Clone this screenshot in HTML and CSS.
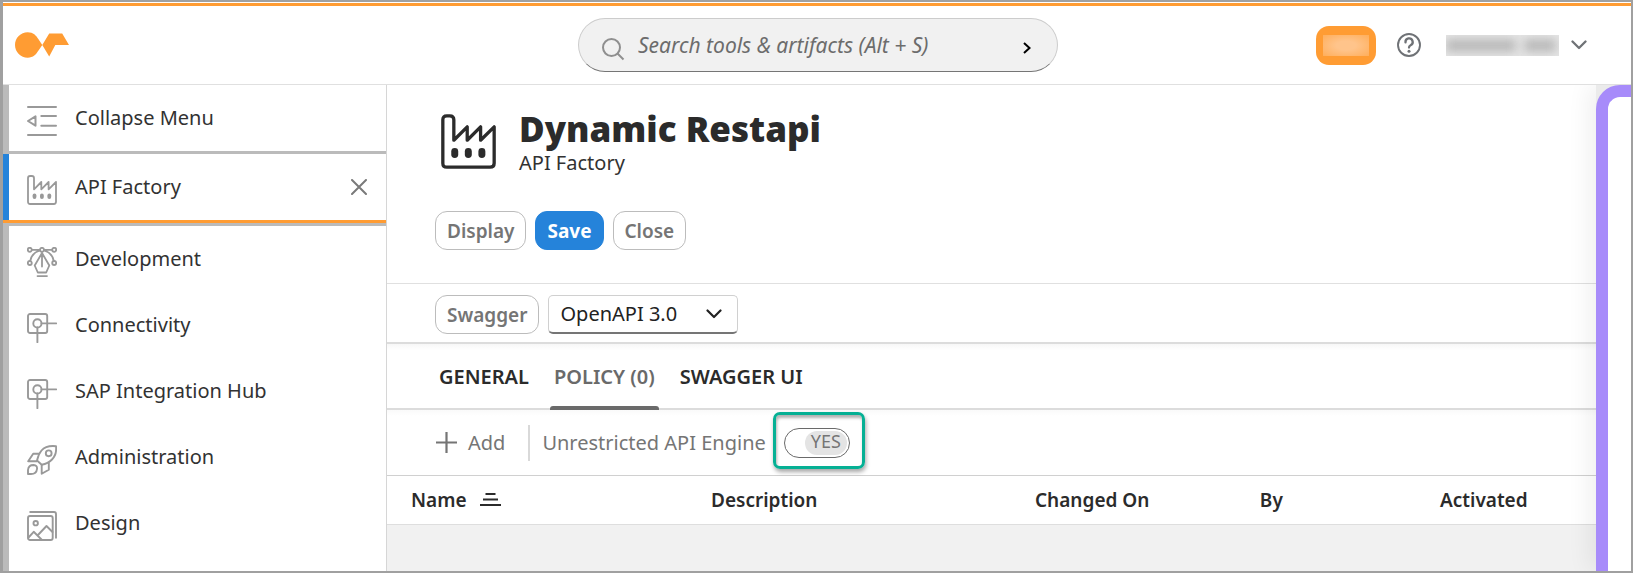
FILE: index.html
```html
<!DOCTYPE html>
<html lang="en">
<head>
<meta charset="utf-8">
<title>Dynamic Restapi - API Factory</title>
<link rel="stylesheet" href="styles.css">
</head>
<body>
<svg class="defs" aria-hidden="true">
  <symbol id="factory" viewBox="0 0 30 30">
    <path d="M1 3.2Q1 1 3.200 1H4.800Q7 1 7 3.200V14.300L14.300 7V14.300L21.600 7V14.300L29 7V26.800Q29 29 26.800 29H3.200Q1 29 1 26.800Z" fill="none" stroke="currentColor" stroke-width="1.800" stroke-linejoin="round"/>
    <rect x="5.600" y="18.600" width="3.800" height="5.400" rx="1.900" fill="currentColor"/>
    <rect x="13" y="18.600" width="3.800" height="5.400" rx="1.900" fill="currentColor"/>
    <rect x="20.400" y="18.600" width="3.800" height="5.400" rx="1.900" fill="currentColor"/>
  </symbol>
  <symbol id="connect" viewBox="0 0 30 30">
    <g fill="none" stroke="currentColor" stroke-width="1.900" stroke-linecap="round">
      <rect x="1" y="1" width="19.200" height="19" rx="2"/>
      <circle cx="10.400" cy="10.400" r="4.100"/>
      <path d="M14.500 10.400H29.200M10.400 14.500V29.200"/>
    </g>
  </symbol>
</svg>

<header class="topbar">
  <a class="logo" href="#" aria-label="Home">
    <svg width="54" height="26" viewBox="0 0 54 26"><path d="M12.700 .3C18.300 .3 21.200 3.600 23.500 7.300L27.300 12.900L23.500 18.500C21.200 22.200 18.300 25.700 12.700 25.700C5.700 25.700 0 20 0 13S5.700 .3 12.700 .3ZM34.200 1.500H47.200L54 13H40.300L34.200 24.500L27.300 12.900Z" fill="#ff9c33"/></svg>
  </a>
  <form class="search" role="search">
    <svg width="24" height="24" viewBox="0 0 24 24" fill="none" stroke="#8f8f8f" stroke-width="2"><circle cx="10.500" cy="10.500" r="8.500"/><path d="M16.500 16.500L22.500 22.500"/></svg>
    <input class="search-input" type="text" aria-label="Search" placeholder="Search tools &amp; artifacts (Alt + S)">
    <button class="search-go" type="button" aria-label="Go"><svg width="8" height="12" viewBox="0 0 8 12" fill="none" stroke="#000" stroke-width="2"><path d="M1 1L6.500 6L1 11"/></svg></button>
  </form>
  <div class="account">
    <span class="badge"><span class="badge-mask"></span></span>
    <button class="plain help" type="button" aria-label="Help"><svg width="24" height="24" viewBox="0 0 24 24" fill="none" stroke="#6f7276" stroke-width="1.900"><circle cx="12" cy="12" r="11"/><path d="M8.500 9.300A3.600 3.600 0 1 1 13.600 12.200Q12 13 12 14.500" stroke-width="2.300" stroke-linecap="round"/><circle cx="12" cy="18.300" r="1.500" fill="#6f7276" stroke="none"/></svg></button>
    <button class="plain user" type="button" aria-label="User menu"><span class="user-mask"><span class="smear smear-a"></span><span class="smear smear-b"></span></span><svg width="16" height="10" viewBox="0 0 16 10" fill="none" stroke="#6f7276" stroke-width="2.300" stroke-linecap="round" stroke-linejoin="round"><path d="M1.500 1.500L8 8L14.500 1.500"/></svg></button>
  </div>
</header>

<div class="workspace">
  <nav class="sidebar" aria-label="Main menu">
    <button class="nav-item nav-collapse" type="button">
      <svg class="nav-icon" viewBox="0 0 30 30" fill="none" stroke="currentColor" stroke-width="2" stroke-linecap="round" stroke-linejoin="round"><path d="M1 1H29M14.300 10H29M14.300 19.700H29M1 29H29M8.500 10.300V19.700L1 15Z"/></svg>
      <span>Collapse Menu</span>
    </button>
    <div class="nav-current">
      <a class="nav-item" href="#"><svg class="nav-icon"><use href="#factory"/></svg><span>API Factory</span></a>
      <button class="plain" type="button" aria-label="Close API Factory"><svg width="16" height="16" viewBox="0 0 16 16" stroke="#7a7a7a" stroke-width="2" stroke-linecap="round"><path d="M1 1L15 15M15 1L1 15"/></svg></button>
    </div>
    <a class="nav-item" href="#">
      <svg class="nav-icon" viewBox="0 0 30 30" fill="none" stroke="currentColor" stroke-width="1.800" stroke-linecap="round" stroke-linejoin="round"><circle cx="2.800" cy="2.800" r="2"/><circle cx="15" cy="2.800" r="2"/><circle cx="27.200" cy="2.800" r="2"/><circle cx="2.800" cy="16" r="2"/><circle cx="27.200" cy="16" r="2"/><path d="M4.800 2.800H13M17 2.800H25.200M13 3.500Q4.500 6 3.200 14M17 3.500Q25.500 6 26.800 14M15 6L7.700 18.500L10.800 25.500H19.200L22.300 18.500ZM15 6V19.500M10.500 29.100H20"/></svg>
      <span>Development</span>
    </a>
    <a class="nav-item" href="#"><svg class="nav-icon"><use href="#connect"/></svg><span>Connectivity</span></a>
    <a class="nav-item" href="#"><svg class="nav-icon"><use href="#connect"/></svg><span>SAP Integration Hub</span></a>
    <a class="nav-item" href="#">
      <svg class="nav-icon" viewBox="0 0 30 30" fill="none" stroke="currentColor" stroke-width="1.900" stroke-linejoin="round"><path d="M29 1.200Q19 .2 14.500 5.500Q11.500 9 10 15.500L14.700 19.700Q21 18.700 25 14.500Q30 9.500 29 1.200Z"/><circle cx="21.700" cy="8.300" r="2.900"/><path d="M12.500 8.700H6.200L1.200 16.300H10M14.700 19.700V28.800L21.800 24.700V17.300M1 29V25Q1.500 20 6.500 20Q10.500 20.300 10 24Q9.500 29 4 29Z"/></svg>
      <span>Administration</span>
    </a>
    <a class="nav-item" href="#">
      <svg class="nav-icon" viewBox="0 0 30 30" fill="none" stroke="currentColor" stroke-width="1.900" stroke-linecap="round" stroke-linejoin="round"><rect x="1" y="5" width="24.700" height="24" rx="2"/><path d="M3.200 1H27Q29 1 29 3V26.800M1.500 26.500L6.700 20.800L14.500 28.500M10.500 24.500L19.500 15L25.500 21"/><circle cx="8.700" cy="12.200" r="2.200"/></svg>
      <span>Design</span>
    </a>
  </nav>

  <main class="content">
    <section class="hero">
      <div class="hero-title">
        <svg class="hero-icon"><use href="#factory"/></svg>
        <div>
          <h1>Dynamic Restapi</h1>
          <p>API Factory</p>
        </div>
      </div>
      <div class="actions">
        <button class="btn" type="button">Display</button>
        <button class="btn btn-primary" type="button">Save</button>
        <button class="btn" type="button">Close</button>
      </div>
    </section>
    <section class="actions swagger-bar">
      <button class="btn" type="button">Swagger</button>
      <span class="select">
        <select aria-label="Specification version"><option>OpenAPI 3.0</option></select>
        <svg width="16" height="10" viewBox="0 0 16 10" fill="none" stroke="#222" stroke-width="2.200" stroke-linecap="round" stroke-linejoin="round"><path d="M1.500 1.500L8 8L14.500 1.500"/></svg>
      </span>
    </section>
    <div class="tabs" role="tablist">
      <button class="tab" type="button" role="tab">GENERAL</button>
      <button class="tab tab-active" type="button" role="tab" aria-selected="true">POLICY (0)</button>
      <button class="tab" type="button" role="tab">SWAGGER UI</button>
    </div>
    <div class="toolbar">
      <button class="plain add" type="button"><svg width="21" height="21" viewBox="0 0 21 21" stroke="#757575" stroke-width="2.200"><path d="M0 10.500H21M10.500 0V21"/></svg>Add</button>
      <label class="engine" for="engine">Unrestricted API Engine</label>
      <span class="highlight">
        <span class="switch"><input id="engine" type="checkbox" checked><span class="knob">YES</span></span>
      </span>
    </div>
    <table class="policies">
      <colgroup><col class="c-name"><col class="c-desc"><col class="c-date"><col class="c-by"><col></colgroup>
      <thead>
        <tr>
          <th scope="col"><span class="sorted">Name <svg width="21" height="13" viewBox="0 0 21 13" stroke="#2b2b2b" stroke-width="2"><path d="M5.500 1H15.500M3 6.500H18M0 12H21"/></svg></span></th>
          <th scope="col">Description</th>
          <th scope="col">Changed On</th>
          <th scope="col">By</th>
          <th scope="col">Activated</th>
        </tr>
      </thead>
    </table>
  </main>

  <aside class="drawer" aria-label="Side panel"><div class="drawer-body"></div></aside>
</div>
</body>
</html>
```
FILE: styles.css
```css
* { box-sizing: border-box; }

body {
  margin: 0;
  min-height: 100vh;
  display: flex;
  flex-direction: column;
  border: 2px solid #a0a0a0;
  border-left-width: 3px;
  background: #fff;
  color: #323232;
  font: 20px/28px "Noto Sans", sans-serif;
}

button, input, select { font: inherit; color: inherit; }
button { cursor: pointer; }
svg { display: block; flex: none; }
.defs { position: absolute; width: 0; height: 0; }

.plain {
  display: flex;
  align-items: center;
  padding: 0;
  border: 0;
  background: none;
}

/* Top bar */
.topbar {
  display: grid;
  grid-template-columns: 1fr minmax(0, 480px) 1fr;
  align-items: center;
  height: 82px;
  margin-top: 1px;
  padding: 0 10px 0 12px;
  border-top: 3px solid #ff9c33;
  border-bottom: 1px solid #e0e0e0;
  flex: none;
}

.search {
  display: flex;
  align-items: center;
  height: 54px;
  padding: 0 26px 0 22px;
  border: 1px solid #ccc;
  border-bottom-color: #757575;
  border-radius: 27px;
  background: #f1f1f1;
}
.search > svg { margin-top: 8px; }
.search-input {
  flex: 1;
  min-width: 0;
  padding: 0;
  margin-left: 13px;
  border: 0;
  background: none;
  font-size: 21px;
  font-style: italic;
}
.search-input::placeholder { color: #6c6c6c; opacity: 1; }
.search-go { padding: 6px 0 0; border: 0; background: none; }

.account {
  display: flex;
  align-items: center;
  justify-content: flex-end;
  gap: 21px;
  padding-right: 34px;
}
.badge {
  display: flex;
  padding: 9px 7px;
  border-radius: 13px;
  background: #ff9c33;
}
.badge-mask {
  width: 46px;
  height: 21px;
  background: radial-gradient(ellipse at center, #ffc48b 30%, #ffae5a);
}
.user { gap: 12px; margin-left: 4px; }
.user-mask {
  display: flex;
  align-items: center;
  gap: 8px;
  width: 113px;
  height: 21px;
  overflow: hidden;
  background: #e6e6e6;
}
.smear { height: 13px; background: #bababa; filter: blur(5px); }
.smear-a { width: 70px; }
.smear-b { width: 32px; }

/* Body columns */
.workspace { display: flex; flex: 1; }

.sidebar {
  width: 384px;
  flex: none;
  border-left: 6px solid #bbb;
  border-right: 1px solid #d6d6d6;
}
.nav-item {
  display: flex;
  align-items: center;
  gap: 18px;
  width: 100%;
  height: 66px;
  padding: 0 18px;
  border: 0;
  background: none;
  color: #323232;
  text-decoration: none;
  text-align: left;
}
.nav-icon { width: 30px; height: 30px; margin-top: 6px; color: #999; }
.nav-collapse { height: 69px; border-bottom: 3px solid #bbb; }
.nav-current {
  display: flex;
  align-items: center;
  margin: 0 0 3px -6px;
  padding-right: 19px;
  border-bottom: 3px solid #ff9c33;
  background: linear-gradient(#2583da, #2583da) left / 6px 100% no-repeat;
  box-shadow: 0 3px #bbb;
}
.nav-current .nav-item { padding-left: 24px; }

.content {
  flex: 1;
  min-width: 0;
  display: flex;
  flex-direction: column;
  background: #f1f1f1;
}
.hero { padding: 24px 48px 33px; border-bottom: 1px solid #e0e0e0; background: #fff; }
.hero-title { display: flex; align-items: center; gap: 23px; padding-left: 6px; }
.hero-icon { width: 55px; height: 55px; margin-bottom: 4px; color: #2b2b2b; }
h1 { margin: 0; font-size: 35px; line-height: 40px; font-weight: 900; color: #2b2b2b; }
p { margin: 0; }

.actions { display: flex; gap: 9px; }
.hero .actions { margin-top: 34px; }
.btn {
  height: 39px;
  padding: 0 11px;
  border: 1px solid #bcbcbc;
  border-radius: 12px;
  background: #fff;
  color: #757575;
  font-size: 19px;
  font-weight: 600;
  line-height: 24px;
}
.btn-primary { border-color: #2583da; background: #2583da; color: #fff; font-weight: 700; }
.swagger-bar { padding: 11px 48px 8px; border-bottom: 2px solid #dcdcdc; background: #fff; }
.select { position: relative; width: 190px; }
.select select {
  appearance: none;
  width: 100%;
  height: 39px;
  padding: 0 40px 0 11px;
  border: 1px solid #d0d0d0;
  border-bottom: 2px solid #757575;
  border-radius: 5px;
  background: #fff;
  color: #222;
}
.select svg { position: absolute; right: 16px; top: 14px; pointer-events: none; }

.tabs {
  display: flex;
  gap: 17px;
  height: 66px;
  padding-left: 48px;
  border-bottom: 2px solid #dcdcdc;
  background: linear-gradient(#f7f7f7, #fff 6px);
}
.tab {
  position: relative;
  padding: 2px 4px 0;
  border: 0;
  background: none;
  font-weight: 600;
  color: #2b2b2b;
}
.tab-active { color: #6a6a6a; }
.tab-active::after {
  content: "";
  position: absolute;
  inset: auto 0 -2px;
  height: 4px;
  border-radius: 3px 3px 0 0;
  background: #6a6a6a;
}

.toolbar {
  display: flex;
  align-items: center;
  height: 66px;
  padding-left: 49px;
  border-bottom: 1px solid #d0d0d0;
  background: linear-gradient(#fafafa, #fff 6px);
  color: #757575;
}
.add { gap: 11px; padding-right: 23px; line-height: 36px; border-right: 2px solid #d9d9d9; }
.engine { margin-left: 12px; }
.highlight {
  margin: 0 0 4px 7px;
  padding: 13px 12px 8px 8px;
  border: 3px solid #05b094;
  border-radius: 7px;
  box-shadow: 1px 3px 4px rgba(0, 0, 0, .35), inset 1px 3px 3px rgba(0, 0, 0, .3);
}
.switch { display: flex; position: relative; }
.switch input {
  appearance: none;
  width: 66px;
  height: 30px;
  margin: 0;
  border: 1px solid #6a6a6a;
  border-radius: 15px;
  background: #fff;
}
.knob {
  position: absolute;
  right: 3px;
  top: 3px;
  width: 42px;
  padding-bottom: 3px;
  border-radius: 12px;
  background: #e4e4e4;
  font-size: 18px;
  line-height: 21px;
  text-align: center;
  pointer-events: none;
}

.policies {
  width: 100%;
  table-layout: fixed;
  border-collapse: collapse;
  background: #fff;
}
.c-name, .c-desc { width: 26.8%; }
.c-date { width: 18.6%; }
.c-by { width: 14.9%; }
th {
  height: 48px;
  padding: 0;
  border-bottom: 1px solid #dedede;
  font-size: 19px;
  font-weight: 600;
  text-align: left;
  color: #2b2b2b;
}
th:first-child { padding-left: 24px; }
.sorted { display: flex; align-items: center; gap: 13px; }

.drawer {
  width: 35px;
  flex: none;
  display: flex;
  background: #ebebeb;
  box-shadow: -6px 0 24px rgba(0, 0, 0, .07);
  clip-path: inset(0 0 0 -32px);
}
.drawer-body {
  flex: 1;
  border: solid #a78bfa;
  border-width: 12px 0 0 12px;
  border-top-left-radius: 24px;
  background: #fff;
}
```
